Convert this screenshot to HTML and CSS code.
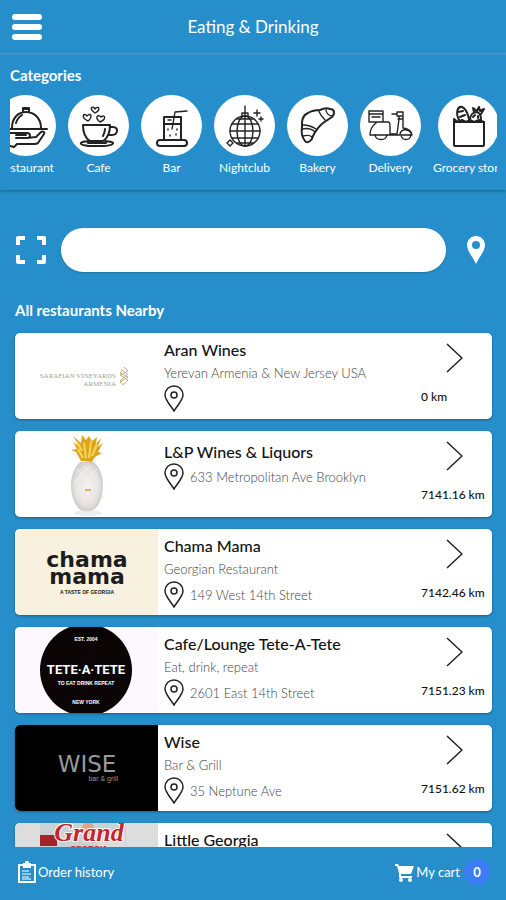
FILE: index.html
```html
<!DOCTYPE html>
<html lang="en">
<head>
  <meta charset="UTF-8">
  <meta name="viewport" content="width=device-width, initial-scale=1.0">
  <title>Eating &amp; Drinking</title>
  <link rel="stylesheet" href="styles.css">
</head>
<body>
  <svg class="symbols" aria-hidden="true">
    <symbol id="pin" viewBox="0 0 20 27">
      <path d="M10 1C5 1 1 4.800 1 10c0 5 6 11 9 16 3-5 9-11 9-16 0-5.200-4-9-9-9z"/>
      <circle cx="10" cy="10" r="3"/>
    </symbol>
    <symbol id="chevron" viewBox="0 0 17 30">
      <path d="M1 1l15 14L1 29"/>
    </symbol>
  </svg>

  <header class="topbar">
    <button class="menu-btn" aria-label="Menu"><span></span><span></span><span></span></button>
    <h1>Eating &amp; Drinking</h1>
  </header>

  <section class="categories">
    <h2>Categories</h2>
    <div class="category-scroll">
      <div class="category-list">
        <button class="category">
          <svg class="category-icon" viewBox="0 0 61 61">
            <path d="M15 34h37M17 33C17 23 23 17 31 17s15 6 15 16M28 16v-3h6v3M28 14h6M21 28c1-4 3-6 6-8"/>
            <path d="M15 38h17c4 0 4 5 0 5H21M21 40h10M32 43l9-1 5-5c2-1 4 0 3 2l-6 9c-1 1-2 1-4 1H22l-3 3-4-1"/>
          </svg>
          <span>Restaurant</span>
        </button>
        <button class="category">
          <svg class="category-icon" viewBox="0 0 61 61">
            <path d="M15 30h27c0 8-2 13-7 16H22c-5-3-7-8-7-16zM42 32h3c6 0 5 8-1 8h-4M37 34c0 3-1 5-2 7"/>
            <path d="M21 46c-12 1-10 4 0 5h15c11-1 13-4 1-5M20 48h18"/>
            <path class="thin" d="M27 18c-7-5-2-8 0-4 3-4 7 0 0 4zM20 26c-8-4-4-9-1-5 4-4 6 1 1 5zM32 27c-6-5-2-8 1-5 4-3 6 2-1 5z"/>
          </svg>
          <span>Cafe</span>
        </button>
        <button class="category">
          <svg class="category-icon" viewBox="0 0 61 61">
            <path d="M23 22h17v23H23zM23 29h17"/>
            <rect x="16" y="45" width="30" height="6" rx="3"/>
            <path class="thin" d="M31 34l3-17 12-1M27 34v1M36 34v1M29 40v1M35 39v1M27 25h3"/>
          </svg>
          <span>Bar</span>
        </button>
        <button class="category">
          <svg class="category-icon" viewBox="0 0 61 61">
            <g class="thin">
              <circle cx="31" cy="36" r="15"/>
              <ellipse cx="31" cy="36" rx="8" ry="15"/>
              <path d="M31 11v40M28 21v-3h6v3M16 36h30M18 29h26M18 43h26M23 24h16M23 48h16"/>
              <path d="M43 15v6M40 18h6M47 22v4M45 24h4M16 45l3 3-3 3-3-3z"/>
            </g>
          </svg>
          <span>Nightclub</span>
        </button>
        <button class="category">
          <svg class="category-icon" viewBox="0 0 61 61">
            <path d="M18 46c-3-4-4-8-3-13 0-5-1-12 6-15 5-3 9-3 12-3 4-2 8-2 10-1 5 0 5 5 2 8-3 2-6 4-9 6-5 4-8 9-10 13-1 5-6 8-8 5z"/>
            <path class="thin" d="M15 34c5-1 10 0 13 3M16 30c5 0 10 2 13 4M16 41c4-1 7-1 9 1M31 15c2 4 5 8 7 10M39 15c0 3 3 6 6 6"/>
          </svg>
          <span>Bakery</span>
        </button>
        <button class="category">
          <svg class="category-icon" viewBox="0 0 61 61">
            <path class="thin" d="M9 16h14v11H9zM9 19h14M12 22h8M17 27h11c2 0 2 2 2 4v8h7l2-15v-3M16 28c-4 3-6 7-6 12h5M37 19h-5M37 17h6v4h-6zM43 21v12c5 0 9 4 9 7h-2M27 40h13M38 24h5"/>
            <path class="thin" d="M15 40c1 6 11 6 12 0zM41 40c1 6 9 6 10 0zM40 39c1-5 8-6 11-1"/>
          </svg>
          <span>Delivery</span>
        </button>
        <button class="category">
          <svg class="category-icon" viewBox="0 0 61 61">
            <rect x="16" y="27" width="30" height="24" rx="1"/>
            <path d="M16 30v-6l4 3 4-2 4 2 4-2 4 2 5-2 5 2v4M21 25c-4-8-1-14 3-13 5 2 6 8 7 12M20 17l5-1M22 22l5-2M32 25c0-5 3-8 7-8 3 1 4 4 4 8M36 17l-1-4 4 3 2-4 1 4 4-2-3 5M35 22l2-2M40 21v2"/>
          </svg>
          <span>Grocery store</span>
        </button>
      </div>
    </div>
  </section>

  <main class="content">
    <form class="search">
      <button type="button" class="icon-btn" aria-label="Scan code">
        <svg class="scan-icon" viewBox="0 0 30 28">
          <path d="M2 9V2h7M21 2h7v7M28 19v7h-7M9 26H2v-7"/>
        </svg>
      </button>
      <input type="search" aria-label="Search restaurants">
      <button type="button" class="icon-btn" aria-label="My location">
        <svg class="location-icon" viewBox="0 0 18 28">
          <path fill-rule="evenodd" d="M9 0C4 0 0 4 0 9c0 6 6 12 9 19 3-7 9-13 9-19 0-5-4-9-9-9zm0 5a4 4 0 1 1 0 8 4 4 0 0 1 0-8z"/>
        </svg>
      </button>
    </form>

    <h2>All restaurants Nearby</h2>

    <div class="restaurants">
      <a class="card" href="#">
        <svg class="card-logo logo-aran" viewBox="0 0 143 86">
          <text x="101" y="45" text-anchor="end">SARAFIAN VINEYARDS</text>
          <text x="101" y="53" text-anchor="end">ARMENIA</text>
          <path d="M109 34l4 4-8 4 8 5-5 5M108 37l-3 3 8 4-8 5 4 3M106 36l6 5M113 41l-8 7"/>
        </svg>
        <div class="card-info">
          <h3>Aran Wines</h3>
          <p>Yerevan Armenia &amp; New Jersey USA</p>
          <div class="address"><svg class="pin"><use href="#pin"/></svg></div>
        </div>
        <div class="card-side">
          <svg class="chevron"><use href="#chevron"/></svg>
          <span>0 km</span>
        </div>
      </a>

      <a class="card" href="#">
        <svg class="card-logo" viewBox="0 0 143 86">
          <defs>
            <radialGradient id="bottle">
              <stop offset="0" stop-color="#f4f1ee"/>
              <stop offset="0.700" stop-color="#e8e4e1"/>
              <stop offset="1" stop-color="#d3cecc"/>
            </radialGradient>
          </defs>
          <ellipse cx="73" cy="82" rx="14" ry="3" fill="#eeeeee"/>
          <path d="M65 31h14c6 6 9 14 9 23 0 11-3 19-8 24-4 3-12 3-16 0-5-5-8-13-8-24 0-9 3-17 9-23z" fill="url(#bottle)"/>
          <path d="M62 38l18 18M59 50l18 19M68 34l17 17M82 38L62 58M85 50L66 69M76 34L59 51" stroke="#f1eeeb" fill="none"/>
          <path d="M66 30l-5-9-5-2 6-1-4-7 7 5-7-11 8 7 1-8 4 5 3-4 3 5 5-4-1 7 5-6-3 9 5-4-5 9 4 1-7 4-3 5z" fill="#dda51f"/>
          <path d="M68 27l-5-9M71 27l-2-15M74 27l2-17M77 25l5-12M67 20l-5-9" stroke="#f8d65c" stroke-width="2" fill="none"/>
          <path d="M70 59h6" stroke="#c8b96b" stroke-width="2"/>
        </svg>
        <div class="card-info no-subtitle">
          <h3>L&amp;P Wines &amp; Liquors</h3>
          <div class="address"><svg class="pin"><use href="#pin"/></svg>633 Metropolitan Ave Brooklyn</div>
        </div>
        <div class="card-side">
          <svg class="chevron"><use href="#chevron"/></svg>
          <span>7141.16 km</span>
        </div>
      </a>

      <a class="card" href="#">
        <svg class="card-logo logo-chama" viewBox="0 0 143 86">
          <text class="name" x="72" y="38" text-anchor="middle">chama</text>
          <text class="name" x="72" y="55" text-anchor="middle">mama</text>
          <text class="tagline" x="72" y="65" text-anchor="middle">A TASTE OF GEORGIA</text>
        </svg>
        <div class="card-info">
          <h3>Chama Mama</h3>
          <p>Georgian Restaurant</p>
          <div class="address"><svg class="pin"><use href="#pin"/></svg>149 West 14th Street</div>
        </div>
        <div class="card-side">
          <svg class="chevron"><use href="#chevron"/></svg>
          <span>7142.46 km</span>
        </div>
      </a>

      <a class="card" href="#">
        <svg class="card-logo logo-tete" viewBox="0 0 143 86">
          <circle cx="71" cy="43" r="46"/>
          <text class="small" x="71" y="14" text-anchor="middle">EST. 2004</text>
          <text class="name" x="71" y="47" text-anchor="middle">TETE·A·TETE</text>
          <text class="small" x="71" y="58" text-anchor="middle">TO EAT DRINK REPEAT</text>
          <text class="small" x="71" y="77" text-anchor="middle">NEW YORK</text>
        </svg>
        <div class="card-info">
          <h3>Cafe/Lounge Tete-A-Tete</h3>
          <p>Eat, drink, repeat</p>
          <div class="address"><svg class="pin"><use href="#pin"/></svg>2601 East 14th Street</div>
        </div>
        <div class="card-side">
          <svg class="chevron"><use href="#chevron"/></svg>
          <span>7151.23 km</span>
        </div>
      </a>

      <a class="card" href="#">
        <svg class="card-logo logo-wise" viewBox="0 0 143 86">
          <text class="name" x="72" y="47" text-anchor="middle">WISE</text>
          <text class="small" x="103" y="56" text-anchor="end">bar &amp; grill</text>
        </svg>
        <div class="card-info">
          <h3>Wise</h3>
          <p>Bar &amp; Grill</p>
          <div class="address"><svg class="pin"><use href="#pin"/></svg>35 Neptune Ave</div>
        </div>
        <div class="card-side">
          <svg class="chevron"><use href="#chevron"/></svg>
          <span>7151.62 km</span>
        </div>
      </a>

      <a class="card" href="#">
        <svg class="card-logo logo-georgia" viewBox="0 0 143 86">
          <path d="M25 0h86v24H25z" fill="#c9d3d6"/>
          <path d="M25 12h17v11H25z" fill="#a3242a"/>
          <circle cx="73" cy="5" r="6" fill="#e5a57f"/>
          <path d="M88 12l22-3v15H82z" fill="#dddddd"/>
          <text class="name" x="74" y="18" text-anchor="middle">Grand</text>
          <text class="small" x="74" y="28" text-anchor="middle">GEORGIA</text>
        </svg>
        <div class="card-info">
          <h3>Little Georgia</h3>
        </div>
        <div class="card-side">
          <svg class="chevron"><use href="#chevron"/></svg>
        </div>
      </a>
    </div>
  </main>

  <footer class="bottombar">
    <a href="#">
      <svg class="order-icon" viewBox="0 0 18 22">
        <path d="M1 4h16v17H1z" fill="none" stroke="#fff" stroke-width="2"/>
        <path d="M5 2h2c0-3 4-3 4 0h2v5H5z" fill="#fff"/>
        <path d="M4 10h7M4 13h9M4 16h7M4 18h9" stroke="#fff"/>
      </svg>
      Order history
    </a>
    <a href="#">
      <svg class="cart-icon" viewBox="0 0 19 19">
        <path d="M0 1h3l1 2h15l-3 8H6v2h11v2H4V10L2 3H0z" fill="#fff"/>
        <circle cx="6" cy="17" r="2" fill="#fff"/>
        <circle cx="15" cy="17" r="2" fill="#fff"/>
      </svg>
      My cart
      <span class="badge">0</span>
    </a>
  </footer>
</body>
</html>
```

FILE: styles.css
```css
* {
  box-sizing: border-box;
}
body {
  margin: 0;
  height: 100vh;
  display: flex;
  flex-direction: column;
  overflow: hidden;
  background: #268fcb;
  color: #fff;
  font-family: Lato, 'Liberation Sans', sans-serif;
}
h1, h2, h3, p {
  margin: 0;
}
a {
  color: inherit;
  text-decoration: none;
}
button {
  padding: 0;
  border: none;
  background: none;
  color: inherit;
  font-family: inherit;
  cursor: pointer;
}
svg {
  display: block;
  flex: none;
}
.symbols {
  display: none;
}

/* header */
.topbar {
  display: grid;
  grid-template-columns: 30px 1fr 30px;
  align-items: center;
  height: 55px;
  padding: 0 12px;
  border-bottom: 2px solid #419bd0;
}
.topbar h1 {
  text-align: center;
  font-size: 17px;
  font-weight: 400;
}
.menu-btn {
  display: flex;
  flex-direction: column;
  gap: 4px;
}
.menu-btn span {
  width: 30px;
  height: 6px;
  border-radius: 3px;
  background: #fff;
}

/* categories */
.categories {
  padding: 9px 9px 14px 10px;
  box-shadow: 0 1px 3px rgba(0,0,0,0.35);
}
.categories h2 {
  margin-bottom: 8px;
  font-size: 15px;
  line-height: 23px;
}
.category-scroll {
  overflow: hidden;
}
.category-list {
  display: flex;
  gap: 12px;
  margin-left: -15px;
}
.category {
  flex: none;
  display: flex;
  flex-direction: column;
  align-items: center;
  gap: 3px;
  min-width: 61px;
  font-size: 12px;
  line-height: 17px;
  white-space: nowrap;
}
.category-icon {
  width: 61px;
  height: 61px;
  border-radius: 50%;
  background: #fff;
  fill: none;
  stroke: #222;
  stroke-width: 2;
  stroke-linecap: round;
  stroke-linejoin: round;
}
.category-icon .thin {
  stroke-width: 1.4;
}

/* search */
.content {
  flex: 1;
  min-height: 0;
  overflow: hidden;
  padding: 38px 14px 0 15px;
}
.search {
  display: flex;
  align-items: center;
  gap: 14px;
}
.search input {
  flex: 1;
  min-width: 0;
  height: 44px;
  padding: 0 20px;
  border: none;
  border-radius: 22px;
  background: #fff;
  font-size: 16px;
  box-shadow: 0 1px 2px rgba(0,0,0,0.2);
}
.icon-btn {
  display: flex;
  justify-content: center;
  width: 32px;
}
.scan-icon {
  width: 30px;
  height: 28px;
  fill: none;
  stroke: #fff;
  stroke-width: 4;
  stroke-linejoin: round;
}
.location-icon {
  width: 18px;
  height: 28px;
  fill: #fff;
}
.content h2 {
  margin: 26px 0 11px;
  font-size: 15px;
  line-height: 24px;
}

/* restaurant cards */
.restaurants {
  display: flex;
  flex-direction: column;
  gap: 12px;
}
.card {
  display: flex;
  height: 86px;
  overflow: hidden;
  border-radius: 5px;
  background: #fff;
  color: #111;
  box-shadow: 0 1px 3px rgba(0,0,0,0.35);
}
.card-logo {
  width: 143px;
  height: 86px;
}
.card-info {
  flex: 1;
  min-width: 0;
  padding: 6px 0 0 6px;
  white-space: nowrap;
}
.card-info.no-subtitle {
  padding-top: 10px;
}
.card-info h3 {
  font-size: 16px;
  font-weight: 500;
  line-height: 22px;
}
.card-info p {
  color: #444;
  font-size: 13px;
  font-weight: 300;
  line-height: 24px;
}
.address {
  display: flex;
  align-items: center;
  gap: 6px;
  color: #444;
  font-size: 13px;
  font-weight: 300;
}
.pin {
  width: 20px;
  height: 27px;
  fill: none;
  stroke: #222;
  stroke-width: 1.5;
}
.card-side {
  display: flex;
  flex-direction: column;
  gap: 14px;
  width: 71px;
  padding-top: 10px;
  font-size: 12px;
  font-weight: 500;
  line-height: 20px;
  white-space: nowrap;
}
.chevron {
  width: 17px;
  height: 30px;
  margin-left: 25px;
  fill: none;
  stroke: #222;
  stroke-width: 1.5;
}

/* logos */
.logo-aran {
  font: 7px 'Liberation Serif', serif;
  fill: #a89f8c;
}
.logo-aran path {
  fill: none;
  stroke: #c0ae7c;
}
.logo-chama {
  background: #f8f1e0;
  fill: #1c1c1c;
}
.logo-chama .name {
  font: bold 22px 'DejaVu Sans', sans-serif;
}
.logo-chama .tagline {
  font: bold 5px 'Liberation Sans', sans-serif;
}
.logo-tete {
  background: #fcf8fe;
}
.logo-tete circle {
  fill: #0c0506;
}
.logo-tete text {
  fill: #fff;
}
.logo-tete .name {
  font: bold 13px Roboto, sans-serif;
}
.logo-tete .small {
  font: bold 5px 'Liberation Sans', sans-serif;
}
.logo-wise {
  background: #000;
  fill: #999;
}
.logo-wise .name {
  font: 23px 'DejaVu Sans', sans-serif;
}
.logo-wise .small {
  font: 7px 'Liberation Sans', sans-serif;
}
.logo-georgia {
  background: #ddd;
  fill: #c5242b;
}
.logo-georgia .name {
  font: italic bold 26px 'Liberation Serif', serif;
  stroke: #fff;
  stroke-width: 2;
  paint-order: stroke;
}
.logo-georgia .small {
  font: bold 8px 'Liberation Sans', sans-serif;
}

/* footer */
.bottombar {
  display: flex;
  justify-content: space-between;
  align-items: center;
  height: 53px;
  padding: 0 16px 3px 18px;
  font-size: 13px;
}
.bottombar a {
  display: flex;
  align-items: center;
  gap: 2px;
}
.order-icon {
  width: 18px;
  height: 22px;
}
.cart-icon {
  width: 19px;
  height: 19px;
}
.badge {
  width: 26px;
  height: 26px;
  margin-left: 2px;
  border-radius: 50%;
  background: #3a7cf3;
  font-weight: bold;
  line-height: 26px;
  text-align: center;
}
```
